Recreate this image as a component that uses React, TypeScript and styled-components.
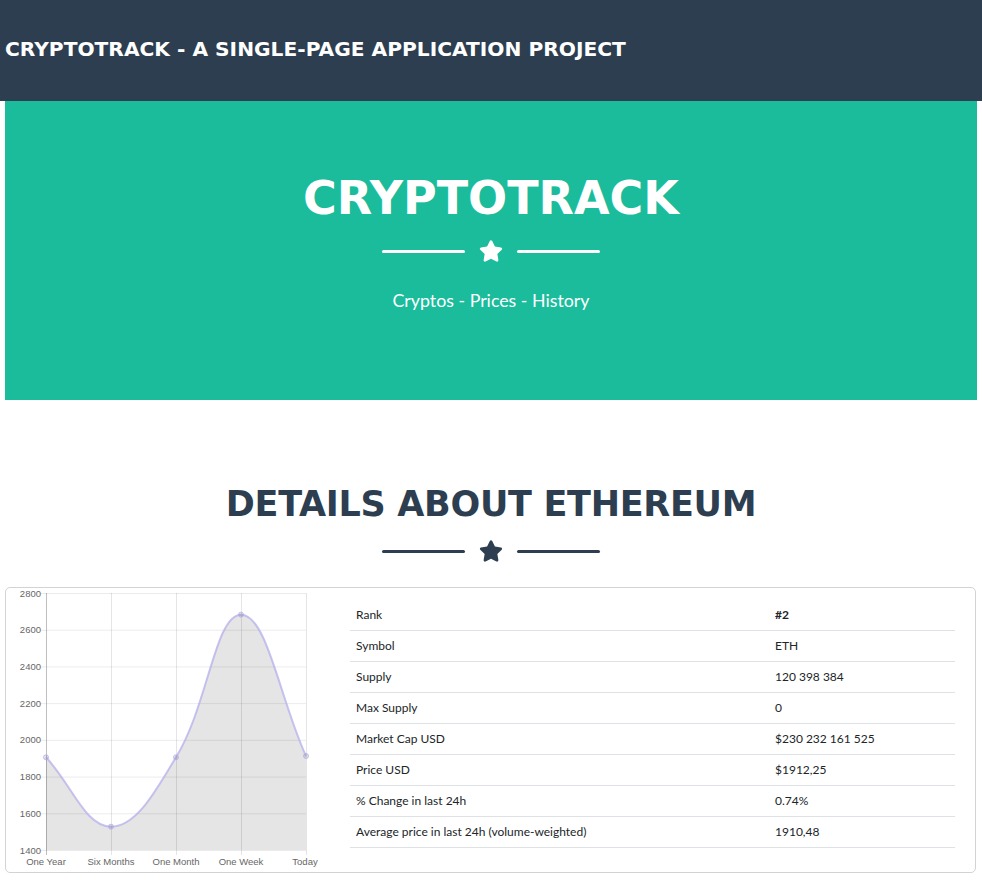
import React from "react";
import styled, { createGlobalStyle } from "styled-components";
import { FaStar } from "react-icons/fa";

const GlobalStyle = createGlobalStyle`
  html, body { margin: 0; padding: 0; background: #fff; }
  body { font-family: Lato, "Noto Sans", sans-serif; color: #212529; }
  * { box-sizing: border-box; }
`;

const HEAD_FONT = `"DejaVu Sans", Inter, sans-serif`;

const Page = styled.div`
  display: flex;
  flex-direction: column;
  width: 982px;
`;

const NavBar = styled.nav`
  height: 101px;
  background: #2c3e50;
  display: flex;
  align-items: center;
  padding: 0 5px 3px;
`;

const Brand = styled.div`
  font-family: ${HEAD_FONT};
  font-weight: 700;
  font-size: 20.2px;
  color: #fff;
  white-space: nowrap;
`;

const Main = styled.main`
  display: flex;
  flex-direction: column;
  padding: 0 5px;
`;

const Hero = styled.header`
  background: #1abc9c;
  height: 299px;
  display: flex;
  flex-direction: column;
  align-items: center;
  padding-top: 69px;
  color: #fff;
`;

const HeroTitle = styled.h1`
  margin: 0;
  font-family: ${HEAD_FONT};
  font-weight: 700;
  font-size: 46px;
  line-height: 56px;
  text-transform: uppercase;
`;

const Divider = styled.div<{ $dark?: boolean }>`
  display: flex;
  align-items: center;
  justify-content: center;
  gap: 14px;
  margin-top: ${(p) => (p.$dark ? "8px" : "10px")};
  color: ${(p) => (p.$dark ? "#2c3e50" : "#fff")};
  height: 30px;
`;

const DividerLine = styled.span<{ $dark?: boolean }>`
  width: 83px;
  height: 3px;
  border-radius: 2px;
  background: ${(p) => (p.$dark ? "#2c3e50" : "#fff")};
`;

const HeroSub = styled.p`
  margin: 22px 0 0;
  font-family: Lato, sans-serif;
  font-size: 17.8px;
  font-weight: 400;
  line-height: 24px;
`;

const Section = styled.section`
  display: flex;
  flex-direction: column;
  align-items: center;
  padding-top: 80px;
`;

const SectionTitle = styled.h2`
  margin: 0;
  font-family: ${HEAD_FONT};
  font-weight: 700;
  font-size: 35px;
  letter-spacing: -0.3px;
  line-height: 48px;
  color: #2c3e50;
  text-transform: uppercase;
`;

const Card = styled.div`
  align-self: stretch;
  margin-top: 21px;
  margin-right: 1px;
  border: 1px solid #d3d3d3;
  border-radius: 5px;
  height: 286px;
  display: grid;
  grid-template-columns: 344px 1fr;
  padding-right: 20px;
`;

const ChartWrap = styled.div`
  position: relative;
  width: 334px;
  height: 284px;
`;

const Table = styled.table`
  border-collapse: collapse;
  width: 100%;
  margin-top: 11px;
  align-self: start;
  font-family: Lato, sans-serif;
  font-size: 12px;
  color: #212529;
`;

const Row = styled.tr`
  height: 31px;
  border-bottom: 1px solid #dee2e6;
`;

const Cell = styled.td<{ $value?: boolean; $bold?: boolean }>`
  padding: 0 6px;
  width: ${(p) => (p.$value ? "186px" : "auto")};
  font-weight: ${(p) => (p.$bold ? 700 : 400)};
  vertical-align: middle;
`;

const AxisText = styled.text`
  font-family: "Liberation Sans", Arial, sans-serif;
  font-size: 9.5px;
  fill: #666;
`;

// Chart in SVG coordinates (origin at card inner top-left: page x=6, y=588)
const OX = 6;
const OY = 588;
const xs = [46, 111, 176, 241, 306].map((x) => x - OX);
const top = 593 - OY;
const bottom = 850 - OY;
const vToY = (v: number) => top + ((2800 - v) / 1400) * (bottom - top);
const values = [1905, 1527, 1905, 2682, 1912.25];
const labels = ["One Year", "Six Months", "One Month", "One Week", "Today"];
const yTicks = [2800, 2600, 2400, 2200, 2000, 1800, 1600, 1400];

type P = { x: number; y: number };
const pts: P[] = values.map((v, i) => ({ x: xs[i], y: vToY(v) }));

function controlPoints(points: P[], t = 0.4) {
  return points.map((cur, i) => {
    const prev = points[i - 1] || cur;
    const next = points[i + 1] || cur;
    const d01 = Math.hypot(cur.x - prev.x, cur.y - prev.y);
    const d12 = Math.hypot(next.x - cur.x, next.y - cur.y);
    let s01 = d01 / (d01 + d12 || 1);
    let s12 = d12 / (d01 + d12 || 1);
    s01 = isNaN(s01) ? 0 : s01;
    s12 = isNaN(s12) ? 0 : s12;
    const fa = t * s01;
    const fb = t * s12;
    const clampY = (y: number) => Math.min(bottom, Math.max(top, y));
    return {
      prev: { x: cur.x - fa * (next.x - prev.x), y: clampY(cur.y - fa * (next.y - prev.y)) },
      next: { x: cur.x + fb * (next.x - prev.x), y: clampY(cur.y + fb * (next.y - prev.y)) },
    };
  });
}

const cps = controlPoints(pts);
let linePath = `M ${pts[0].x} ${pts[0].y}`;
for (let i = 1; i < pts.length; i++) {
  const a = cps[i - 1].next;
  const b = cps[i].prev;
  linePath += ` C ${a.x} ${a.y} ${b.x} ${b.y} ${pts[i].x} ${pts[i].y}`;
}
const areaPath = `${linePath} L ${pts[pts.length - 1].x} ${bottom} L ${pts[0].x} ${bottom} Z`;

const PriceChart = () => (
  <ChartWrap>
    <svg width={334} height={284} viewBox="0 0 334 284">
      {yTicks.map((v) => (
        <g key={v}>
          <line x1={xs[0] - 6} x2={xs[4]} y1={vToY(v) + 0.5} y2={vToY(v) + 0.5} stroke="rgba(0,0,0,0.08)" strokeWidth={1} />
          <AxisText x={xs[0] - 5} y={vToY(v) + 3.5} textAnchor="end">
            {v}
          </AxisText>
        </g>
      ))}
      {xs.map((x, i) => (
        <line key={i} x1={x + 0.5} x2={x + 0.5} y1={top} y2={bottom + 5} stroke={i === 0 ? "rgba(0,0,0,0.25)" : "rgba(0,0,0,0.1)"} strokeWidth={1} />
      ))}
      <path d={areaPath} fill="rgba(0,0,0,0.1)" />
      <path d={linePath} fill="none" stroke="rgba(180,175,235,0.75)" strokeWidth={2} />
      {pts.map((p, i) => (
        <circle key={i} cx={p.x} cy={p.y} r={2.5} fill="rgba(0,0,0,0.1)" stroke="rgba(180,175,235,0.8)" strokeWidth={1} />
      ))}
      {labels.map((l, i) => (
        <AxisText key={l} x={xs[i] + (i === 4 ? -1 : 0)} y={bottom + 14.5} textAnchor="middle">
          {l}
        </AxisText>
      ))}
    </svg>
  </ChartWrap>
);

const rows: [string, string, boolean?][] = [
  ["Rank", "#2", true],
  ["Symbol", "ETH"],
  ["Supply", "120 398 384"],
  ["Max Supply", "0"],
  ["Market Cap USD", "$230 232 161 525"],
  ["Price USD", "$1912,25"],
  ["% Change in last 24h", "0.74%"],
  ["Average price in last 24h (volume-weighted)", "1910,48"],
];

const StarDivider = ({ dark }: { dark?: boolean }) => (
  <Divider $dark={dark}>
    <DividerLine $dark={dark} />
    <FaStar size={24} />
    <DividerLine $dark={dark} />
  </Divider>
);

export default function App() {
  return (
    <Page>
      <GlobalStyle />
      <NavBar>
        <Brand>CRYPTOTRACK - A SINGLE-PAGE APPLICATION PROJECT</Brand>
      </NavBar>
      <Main>
        <Hero>
          <HeroTitle>CryptoTrack</HeroTitle>
          <StarDivider />
          <HeroSub>Cryptos - Prices - History</HeroSub>
        </Hero>
        <Section>
          <SectionTitle>Details about Ethereum</SectionTitle>
          <StarDivider dark />
          <Card>
            <PriceChart />
            <Table>
              <tbody>
                {rows.map(([k, v, b]) => (
                  <Row key={k}>
                    <Cell>{k}</Cell>
                    <Cell $value $bold={b}>
                      {v}
                    </Cell>
                  </Row>
                ))}
              </tbody>
            </Table>
          </Card>
        </Section>
      </Main>
    </Page>
  );
}
